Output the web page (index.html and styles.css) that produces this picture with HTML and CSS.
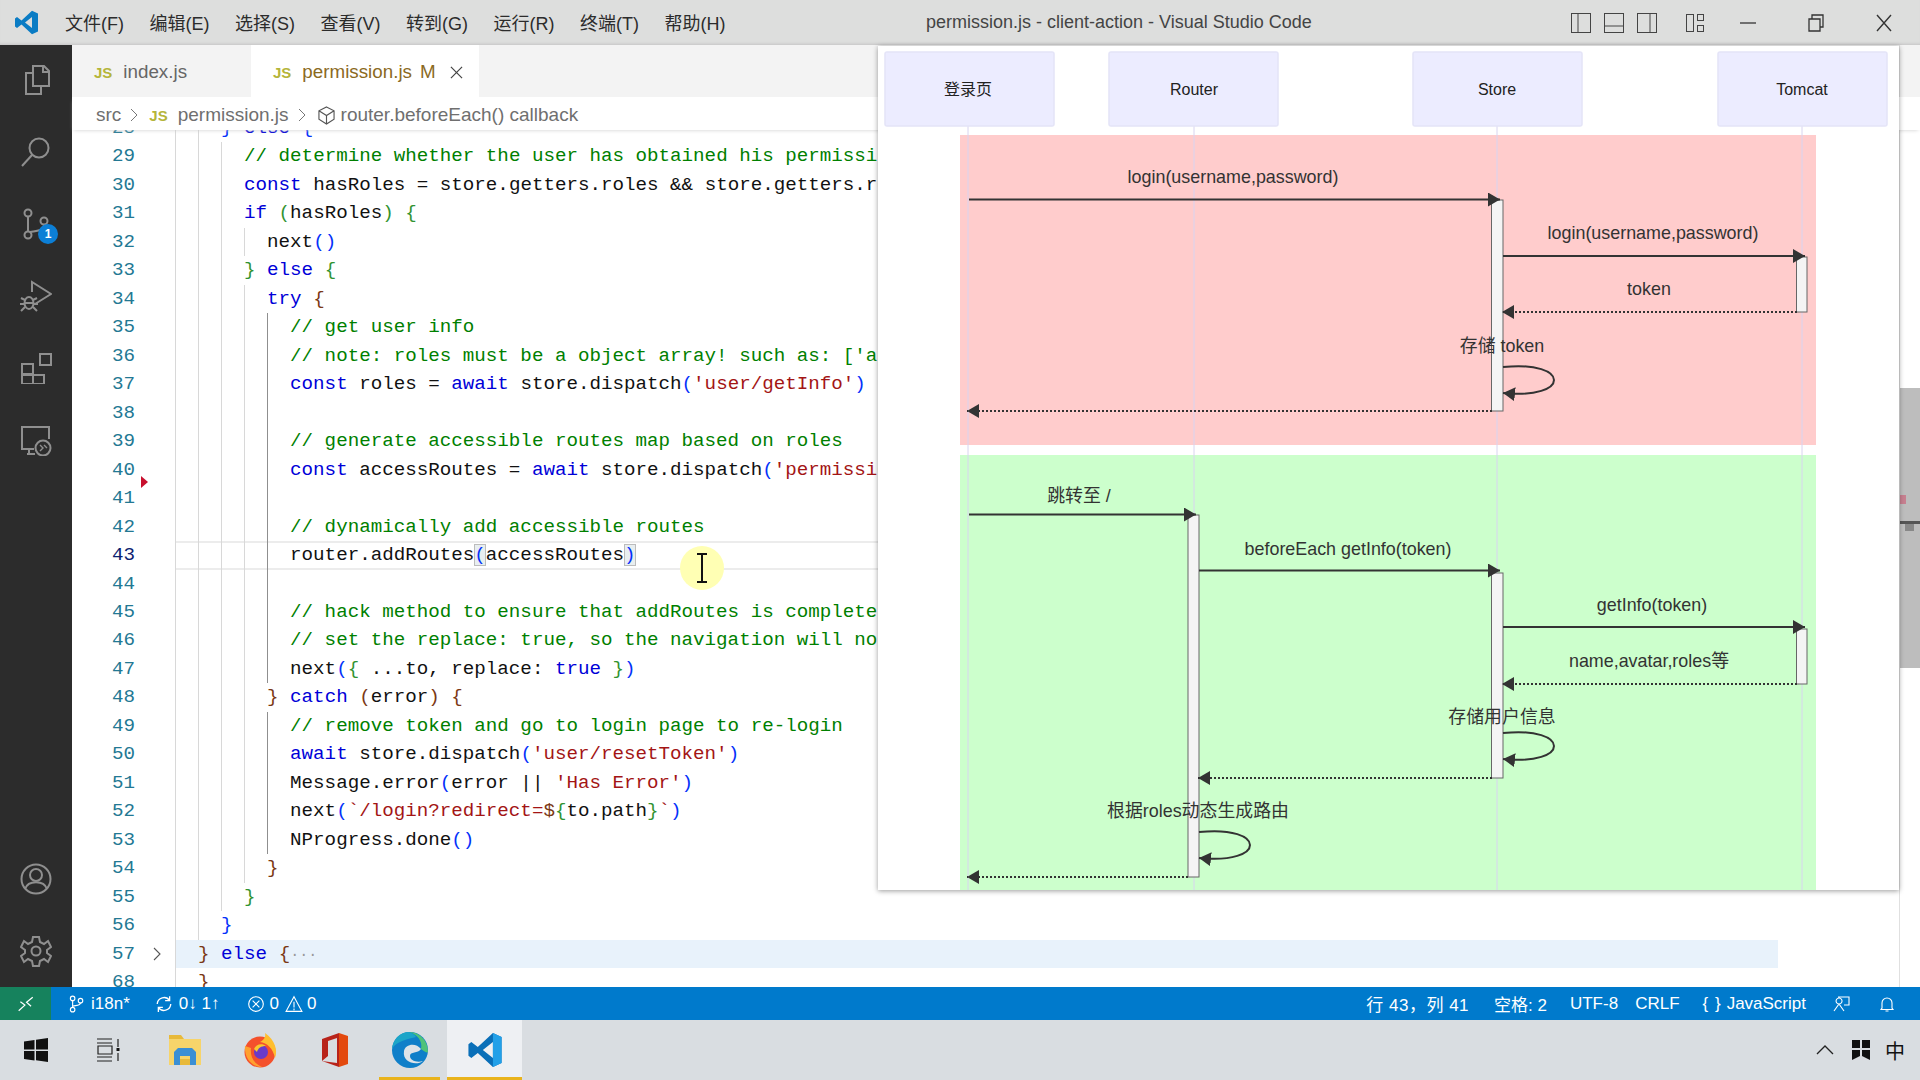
FILE: index.html
```html
<!DOCTYPE html>
<html lang="zh">
<head>
<meta charset="utf-8">
<title>permission.js - client-action - Visual Studio Code</title>
<link rel="stylesheet" href="styles.css">
</head>
<body>
<div class="app">
  <header class="titlebar">
    <svg class="logo" viewBox="0 0 100 100"><path fill="#0a7cc4" fill-rule="evenodd" d="M72 3 96 14V86L72 97 30 58 12 72 4 66V34L12 28 30 42ZM72 28 44 50 72 72Z"/></svg>
    <nav class="menu">
      <span>文件(F)</span><span>编辑(E)</span><span>选择(S)</span><span>查看(V)</span><span>转到(G)</span><span>运行(R)</span><span>终端(T)</span><span>帮助(H)</span>
    </nav>
    <div class="wintitle">permission.js - client-action - Visual Studio Code</div>
    <div class="layout-icons">
      <svg viewBox="0 0 22 22"><rect x="1.5" y="1.5" width="19" height="19" fill="none" stroke="#444"/><path d="M8 2V20" stroke="#444"/></svg>
      <svg viewBox="0 0 22 22"><rect x="1.5" y="1.5" width="19" height="19" fill="none" stroke="#444"/><path d="M2 14H20" stroke="#444"/></svg>
      <svg viewBox="0 0 22 22"><rect x="1.5" y="1.5" width="19" height="19" fill="none" stroke="#444"/><path d="M14 2V20" stroke="#444"/></svg>
      <svg class="split" viewBox="0 0 22 22"><rect x="2.5" y="2.5" width="7" height="17" fill="none" stroke="#444"/><rect x="13.5" y="2.5" width="6" height="6" fill="none" stroke="#444"/><rect x="13.5" y="13.5" width="6" height="6" fill="none" stroke="#444"/></svg>
    </div>
    <div class="win-controls">
      <svg viewBox="0 0 20 20"><path d="M2 10H18" stroke="#333" stroke-width="1.3"/></svg>
      <svg viewBox="0 0 20 20"><path d="M3 6H14V18H3ZM6 6V2H17V14H14" fill="none" stroke="#333" stroke-width="1.3"/></svg>
      <svg viewBox="0 0 20 20"><path d="M3 2 17 18M17 2 3 18" stroke="#333" stroke-width="1.4"/></svg>
    </div>
  </header>

  <div class="main">
    <aside class="activity">
      <svg class="act" viewBox="0 0 32 32"><path d="M13 2H24L29 7V22H13ZM23 2V8H29M13 9H6V30H21V22" fill="none" stroke="#8f8f8f" stroke-width="2"/></svg>
      <svg class="act" viewBox="0 0 32 32"><circle cx="19" cy="12" r="9.5" fill="none" stroke="#8f8f8f" stroke-width="2"/><path d="M12 19 2 30" stroke="#8f8f8f" stroke-width="2"/></svg>
      <div class="act-wrap">
        <svg class="act" viewBox="0 0 32 32"><circle cx="8" cy="5" r="3.5" fill="none" stroke="#8f8f8f" stroke-width="2"/><circle cx="8" cy="27" r="3.5" fill="none" stroke="#8f8f8f" stroke-width="2"/><circle cx="24" cy="13" r="3.5" fill="none" stroke="#8f8f8f" stroke-width="2"/><path d="M8 9V23M10 24C18 23 24 22 24 17" fill="none" stroke="#8f8f8f" stroke-width="2"/></svg>
        <span class="badge">1</span>
      </div>
      <svg class="act" viewBox="0 0 32 32"><path d="M12 12V2L31 14 15 24" fill="none" stroke="#8f8f8f" stroke-width="2"/><ellipse cx="9" cy="23" rx="4.5" ry="6" fill="none" stroke="#8f8f8f" stroke-width="2"/><path d="M1 18 5 20M17 18 13 20M0 24H4M14 24H18M1 31 5 27M17 31 13 27M4 23H14" stroke="#8f8f8f" stroke-width="2"/></svg>
      <svg class="act" viewBox="0 0 32 32"><path d="M2 12H13V23H24V32H2ZM2 22H13V32M13 12" fill="none" stroke="#8f8f8f" stroke-width="2"/><path d="M13 23H2M13 32V23" stroke="#8f8f8f" stroke-width="2"/><rect x="20" y="2" width="11" height="11" fill="none" stroke="#8f8f8f" stroke-width="2"/></svg>
      <svg class="act" viewBox="0 0 32 32"><path d="M14 25H2V3H29V15M7 30H15M9 25V30" fill="none" stroke="#8f8f8f" stroke-width="2"/><circle cx="23" cy="24" r="7.5" fill="#2c2c2c" stroke="#8f8f8f" stroke-width="2"/><path d="M20 21 23 24 20 27M24 21 27 24" fill="none" stroke="#8f8f8f" stroke-width="1.4"/></svg>
      <div class="act-bottom">
        <svg class="act" viewBox="0 0 32 32"><circle cx="16" cy="16" r="14.5" fill="none" stroke="#8f8f8f" stroke-width="2"/><circle cx="16" cy="12" r="6" fill="none" stroke="#8f8f8f" stroke-width="2"/><path d="M5 26C8 17 24 17 27 26" fill="none" stroke="#8f8f8f" stroke-width="2"/></svg>
        <svg class="act" viewBox="0 0 32 32"><circle cx="16" cy="16" r="4.5" fill="none" stroke="#8f8f8f" stroke-width="2"/><path d="M13 2H19L20 7 24 9 28 6 31 12 27 15V18L31 21 28 27 24 24 20 26 19 31H13L12 26 8 24 4 27 1 21 5 18V15L1 12 4 6 8 9 12 7Z" fill="none" stroke="#8f8f8f" stroke-width="2"/></svg>
      </div>
    </aside>

    <section class="editor">
      <div class="tabs">
        <div class="tab"><span class="js">JS</span><span class="tab-name">index.js</span></div>
        <div class="tab active"><span class="js">JS</span><span class="tab-name mod">permission.js</span><span class="tab-m">M</span><svg class="tab-x" viewBox="0 0 14 14"><path d="M1 1 13 13M13 1 1 13" stroke="#444" stroke-width="1.3"/></svg></div>
      </div>
      <div class="crumbs">
        <span>src</span>
        <svg class="chev" viewBox="0 0 8 16"><path d="M1 2 7 8 1 14" fill="none" stroke="#777"/></svg>
        <span class="js crumb-js">JS</span>
        <span>permission.js</span>
        <svg class="chev" viewBox="0 0 8 16"><path d="M1 2 7 8 1 14" fill="none" stroke="#777"/></svg>
        <svg class="cube" viewBox="0 0 18 20"><path d="M9 1 17 5V14L9 19 1 14V5ZM1 5 9 10 17 5M9 10V19" fill="none" stroke="#555" stroke-width="1.2"/></svg>
        <span>router.beforeEach() callback</span>
      </div>
      <div class="code-scroll">
        <div class="lines">
          <div class="line"><span class="num">28</span><span class="fold"></span><div class="code"><i class="g"></i><i class="g"></i><span class="t"><span class="b1">}</span> <span class="k">else</span> <span class="b1">{</span></span></div></div>
          <div class="line"><span class="num">29</span><span class="fold"></span><div class="code"><i class="g"></i><i class="g"></i><i class="g"></i><span class="t"><span class="c">// determine whether the user has obtained his permission roles through getInfo</span></span></div></div>
          <div class="line"><span class="num">30</span><span class="fold"></span><div class="code"><i class="g"></i><i class="g"></i><i class="g"></i><span class="t"><span class="k">const</span> hasRoles = store.getters.roles &amp;&amp; store.getters.roles.length &gt; 0</span></div></div>
          <div class="line"><span class="num">31</span><span class="fold"></span><div class="code"><i class="g"></i><i class="g"></i><i class="g"></i><span class="t"><span class="k">if</span> <span class="b2">(</span>hasRoles<span class="b2">)</span> <span class="b2">{</span></span></div></div>
          <div class="line"><span class="num">32</span><span class="fold"></span><div class="code"><i class="g"></i><i class="g"></i><i class="g"></i><i class="g"></i><span class="t">next<span class="b1">()</span></span></div></div>
          <div class="line"><span class="num">33</span><span class="fold"></span><div class="code"><i class="g"></i><i class="g"></i><i class="g"></i><span class="t"><span class="b2">}</span> <span class="k">else</span> <span class="b2">{</span></span></div></div>
          <div class="line"><span class="num">34</span><span class="fold"></span><div class="code"><i class="g"></i><i class="g"></i><i class="g"></i><i class="g"></i><span class="t"><span class="k">try</span> <span class="b3">{</span></span></div></div>
          <div class="line"><span class="num">35</span><span class="fold"></span><div class="code"><i class="g"></i><i class="g"></i><i class="g"></i><i class="g"></i><i class="g a"></i><span class="t"><span class="c">// get user info</span></span></div></div>
          <div class="line"><span class="num">36</span><span class="fold"></span><div class="code"><i class="g"></i><i class="g"></i><i class="g"></i><i class="g"></i><i class="g a"></i><span class="t"><span class="c">// note: roles must be a object array! such as: ['admin'] or ,['developer','editor']</span></span></div></div>
          <div class="line"><span class="num">37</span><span class="fold"></span><div class="code"><i class="g"></i><i class="g"></i><i class="g"></i><i class="g"></i><i class="g a"></i><span class="t"><span class="k">const</span> roles = <span class="k">await</span> store.dispatch<span class="b1">(</span><span class="s">'user/getInfo'</span><span class="b1">)</span></span></div></div>
          <div class="line"><span class="num">38</span><span class="fold"></span><div class="code"><i class="g"></i><i class="g"></i><i class="g"></i><i class="g"></i><i class="g a"></i></div></div>
          <div class="line"><span class="num">39</span><span class="fold"></span><div class="code"><i class="g"></i><i class="g"></i><i class="g"></i><i class="g"></i><i class="g a"></i><span class="t"><span class="c">// generate accessible routes map based on roles</span></span></div></div>
          <div class="line"><span class="num">40</span><span class="fold"><i class="err"></i></span><div class="code"><i class="g"></i><i class="g"></i><i class="g"></i><i class="g"></i><i class="g a"></i><span class="t"><span class="k">const</span> accessRoutes = <span class="k">await</span> store.dispatch<span class="b1">(</span><span class="s">'permission/generateRoutes'</span>, roles<span class="b1">)</span></span></div></div>
          <div class="line"><span class="num">41</span><span class="fold"></span><div class="code"><i class="g"></i><i class="g"></i><i class="g"></i><i class="g"></i><i class="g a"></i></div></div>
          <div class="line"><span class="num">42</span><span class="fold"></span><div class="code"><i class="g"></i><i class="g"></i><i class="g"></i><i class="g"></i><i class="g a"></i><span class="t"><span class="c">// dynamically add accessible routes</span></span></div></div>
          <div class="line cur"><span class="num">43</span><span class="fold"></span><div class="code"><i class="g"></i><i class="g"></i><i class="g"></i><i class="g"></i><i class="g a"></i><span class="t">router.addRoutes<span class="b1 box">(</span>accessRoutes<span class="b1 box">)</span></span></div></div>
          <div class="line"><span class="num">44</span><span class="fold"></span><div class="code"><i class="g"></i><i class="g"></i><i class="g"></i><i class="g"></i><i class="g a"></i></div></div>
          <div class="line"><span class="num">45</span><span class="fold"></span><div class="code"><i class="g"></i><i class="g"></i><i class="g"></i><i class="g"></i><i class="g a"></i><span class="t"><span class="c">// hack method to ensure that addRoutes is complete</span></span></div></div>
          <div class="line"><span class="num">46</span><span class="fold"></span><div class="code"><i class="g"></i><i class="g"></i><i class="g"></i><i class="g"></i><i class="g a"></i><span class="t"><span class="c">// set the replace: true, so the navigation will not leave a history record</span></span></div></div>
          <div class="line"><span class="num">47</span><span class="fold"></span><div class="code"><i class="g"></i><i class="g"></i><i class="g"></i><i class="g"></i><i class="g a"></i><span class="t">next<span class="b1">(</span><span class="b2">{</span> ...to, replace: <span class="k">true</span> <span class="b2">}</span><span class="b1">)</span></span></div></div>
          <div class="line"><span class="num">48</span><span class="fold"></span><div class="code"><i class="g"></i><i class="g"></i><i class="g"></i><i class="g"></i><span class="t"><span class="b3">}</span> <span class="k">catch</span> <span class="b3">(</span>error<span class="b3">)</span> <span class="b3">{</span></span></div></div>
          <div class="line"><span class="num">49</span><span class="fold"></span><div class="code"><i class="g"></i><i class="g"></i><i class="g"></i><i class="g"></i><i class="g a"></i><span class="t"><span class="c">// remove token and go to login page to re-login</span></span></div></div>
          <div class="line"><span class="num">50</span><span class="fold"></span><div class="code"><i class="g"></i><i class="g"></i><i class="g"></i><i class="g"></i><i class="g a"></i><span class="t"><span class="k">await</span> store.dispatch<span class="b1">(</span><span class="s">'user/resetToken'</span><span class="b1">)</span></span></div></div>
          <div class="line"><span class="num">51</span><span class="fold"></span><div class="code"><i class="g"></i><i class="g"></i><i class="g"></i><i class="g"></i><i class="g a"></i><span class="t">Message.error<span class="b1">(</span>error || <span class="s">'Has Error'</span><span class="b1">)</span></span></div></div>
          <div class="line"><span class="num">52</span><span class="fold"></span><div class="code"><i class="g"></i><i class="g"></i><i class="g"></i><i class="g"></i><i class="g a"></i><span class="t">next<span class="b1">(</span><span class="s">`/login?redirect=</span><span class="b3">$</span><span class="b2">{</span>to.path<span class="b2">}</span><span class="s">`</span><span class="b1">)</span></span></div></div>
          <div class="line"><span class="num">53</span><span class="fold"></span><div class="code"><i class="g"></i><i class="g"></i><i class="g"></i><i class="g"></i><i class="g a"></i><span class="t">NProgress.done<span class="b1">()</span></span></div></div>
          <div class="line"><span class="num">54</span><span class="fold"></span><div class="code"><i class="g"></i><i class="g"></i><i class="g"></i><i class="g"></i><span class="t"><span class="b3">}</span></span></div></div>
          <div class="line"><span class="num">55</span><span class="fold"></span><div class="code"><i class="g"></i><i class="g"></i><i class="g"></i><span class="t"><span class="b2">}</span></span></div></div>
          <div class="line"><span class="num">56</span><span class="fold"></span><div class="code"><i class="g"></i><i class="g"></i><span class="t"><span class="b1">}</span></span></div></div>
          <div class="line folded"><span class="num">57</span><span class="fold"><svg class="foldchev" viewBox="0 0 8 16"><path d="M1 2 7 8 1 14" fill="none" stroke="#555" stroke-width="1.1"/></svg></span><div class="code"><i class="g"></i><span class="t"><span class="b3">}</span> <span class="k">else</span> <span class="b3">{</span><span class="dots">···</span></span></div></div>
          <div class="line"><span class="num">68</span><span class="fold"></span><div class="code"><i class="g"></i><span class="t"><span class="b3">}</span></span></div></div>
        </div>
      </div>
      <div class="scrollbar"><i class="thumb"></i><i class="mark-red"></i><i class="mark-line"></i></div>
    </section>
  </div>

  <footer class="statusbar">
    <div class="remote"><svg viewBox="0 0 16 16"><path d="M1.5 14 7 9 3 6M14 2 8.500 6.500 12.500 10" fill="none" stroke="#fff" stroke-width="1.1"/></svg></div>
    <div class="st-left">
      <span class="st-item"><svg viewBox="0 0 16 16"><circle cx="5" cy="3" r="2" fill="none" stroke="#fff"/><circle cx="5" cy="13" r="2" fill="none" stroke="#fff"/><circle cx="12" cy="5" r="2" fill="none" stroke="#fff"/><path d="M5 5V11M5 10C9 9 12 9 12 7" fill="none" stroke="#fff"/></svg>i18n*</span>
      <span class="st-item"><svg viewBox="0 0 16 16"><path d="M2 8A6 6 0 0 1 13 5M14 8A6 6 0 0 1 3 11M13 1V5H9M3 15V11H7" fill="none" stroke="#fff" stroke-width="1.2"/></svg>0↓ 1↑</span>
      <span class="st-item errs"><svg viewBox="0 0 16 16"><circle cx="8" cy="8" r="6.5" fill="none" stroke="#fff"/><path d="M5 5 11 11M11 5 5 11" stroke="#fff"/></svg>0<svg class="warn" viewBox="0 0 16 16"><path d="M8 1.5 15 14.5H1ZM8 6V11M8 12V13.5" fill="none" stroke="#fff"/></svg>0</span>
    </div>
    <div class="st-right">
      <span class="pos">行 43，列 41</span>
      <span class="indent">空格: 2</span>
      <span>UTF-8</span>
      <span class="eol">CRLF</span>
      <span class="lang"><span class="brace">{ }</span>JavaScript</span>
      <svg class="feedback" viewBox="0 0 18 18"><path d="M5 2H16V10H11M1 16 6 9 11 16M6 9A3 3 0 1 1 6.100 9" fill="none" stroke="#fff" stroke-width="1.1"/></svg>
      <svg viewBox="0 0 18 18"><path d="M4 13V8A5 5 0 0 1 14 8V13L15 14.500H3ZM7.500 16H10.500" fill="none" stroke="#fff" stroke-width="1.1"/></svg>
    </div>
  </footer>

  <div class="taskbar">
    <div class="task t-win"><svg class="ti" viewBox="0 0 24 24"><path fill="#111" d="M0 3.500 10.500 2V11.500H0ZM12 1.800 24 0V11.500H12ZM0 13H10.500V22.500L0 21ZM12 13H24V24L12 22.200Z"/></svg></div>
    <div class="task t-view"><svg class="ti" viewBox="0 0 24 24"><path d="M1 1H16M1 5H16M2 8H16V16H2ZM1 19H16M1 23H16M22 1V9M22 15V23" fill="none" stroke="#222" stroke-width="1.2"/><rect x="20.500" y="10" width="3" height="3" fill="#111"/></svg></div>
    <div class="task"><svg class="ti big" viewBox="0 0 36 36"><path fill="#e8b93a" d="M2 3H14L17 7H2Z"/><path fill="#f7d46a" d="M2 7H34V33H2Z"/><path fill="#3b8fd4" d="M7 33V20L11 16H25L29 20V33H23V24H13V33Z"/><rect x="13" y="27" width="10" height="6" fill="#e8b93a"/></svg></div>
    <div class="task"><svg class="ti big" viewBox="0 0 36 36"><circle cx="18" cy="20" r="15.500" fill="#f4512c"/><path fill="#ffbe2e" d="M23 1C33 8 36 18 33 26 31 16 25 11 18 10 22 8 24 5 23 1Z"/><path fill="#ffa02e" d="M3 14C2 25 9 35 20 35 11 31 8 24 9 16Z"/><circle cx="19" cy="20" r="7" fill="#6a3bc8"/><path fill="#f8c82e" d="M12 17C14 12 20 11 24 14 19 14 16 16 15 20Z"/></svg></div>
    <div class="task"><svg class="ti big" viewBox="0 0 36 36"><path fill="#b8231a" d="M5 7 22 1V35L5 29 20 31V6L11 9V24L5 29Z"/><path fill="#e3490e" d="M22 1 31 4V32L22 35Z"/></svg></div>
    <div class="task on-edge"><svg class="ti big" viewBox="0 0 36 36"><circle cx="18" cy="18" r="18" fill="#0f7fc9"/><path fill="#4fc27a" d="M36 20C36 9 28 0 17 0 25 2 31 9 29 17 33 20 35 21 36 20Z"/><path fill="#dde3e8" d="M12 19C13 12 24 10 29 17 26 22 18 19 18 24 18 28 24 31 31 29 25 34 10 31 12 19Z"/><path fill="#1ca5c8" d="M17 0C8 0 1 7 0 17 4 9 17 7 24 5 22 2 20 1 17 0Z"/></svg></div>
    <div class="task on-code"><svg class="ti big" viewBox="0 0 100 100"><path fill="#0a6fb8" fill-rule="evenodd" d="M72 3 96 14V86L72 97 30 58 12 72 4 66V34L12 28 30 42ZM72 28 44 50 72 72Z"/><path fill="#22a0e8" d="M72 3 96 14V86L72 97Z"/></svg></div>
    <div class="tray">
      <svg class="caret" viewBox="0 0 20 12"><path d="M2 10 10 2 18 10" fill="none" stroke="#222" stroke-width="1.3"/></svg>
      <svg class="ime" viewBox="0 0 20 22"><path fill="#111" d="M1 1H9V9H1ZM11 1H19V9H11ZM1 11H9V17L1 21ZM11 11H19V21L11 17Z"/></svg>
      <span class="zh">中</span>
    </div>
  </div>

  <div class="floatwin">
    <svg class="diagram" viewBox="878 46 1021 844">
      <defs>
        <marker id="ah" markerUnits="userSpaceOnUse" markerWidth="13" markerHeight="14" refX="12" refY="7" orient="auto"><path d="M0 0 12 7 0 14Z" fill="#333"/></marker>
      </defs>
      <rect class="bg-red" x="960" y="135" width="856" height="310"/>
      <rect class="bg-green" x="960" y="455" width="856" height="435"/>
      <path class="life" d="M968 126V890M1194 126V890M1497 126V890M1802 126V890"/>

      <rect class="actor" x="885" y="52" width="169" height="74" rx="2"/>
      <rect class="actor" x="1109" y="52" width="169" height="74" rx="2"/>
      <rect class="actor" x="1413" y="52" width="169" height="74" rx="2"/>
      <rect class="actor" x="1718" y="52" width="169" height="74" rx="2"/>
      <text class="atext" x="968" y="89">登录页</text>
      <text class="atext" x="1194" y="89">Router</text>
      <text class="atext" x="1497" y="89">Store</text>
      <text class="atext" x="1802" y="89">Tomcat</text>

      <rect class="activ" x="1491.5" y="200" width="11.5" height="211"/>
      <rect class="activ" x="1796.5" y="257" width="10.5" height="55"/>
      <rect class="activ" x="1188" y="515" width="11" height="362"/>
      <rect class="activ" x="1491.5" y="573" width="11.5" height="205"/>
      <rect class="activ" x="1796.5" y="629" width="10.5" height="55"/>

      <text class="lbl" x="1233" y="177">login(username,password)</text>
      <path class="arrow" d="M969 199.5H1500"/>
      <text class="lbl" x="1653" y="233">login(username,password)</text>
      <path class="arrow" d="M1503 256H1805"/>
      <text class="lbl" x="1649" y="289">token</text>
      <path class="dash" d="M1797 312H1502"/>
      <text class="lbl" x="1502" y="346">存储 token</text>
      <path class="loop" d="M1503 367C1571 360 1571 400 1503 393"/>
      <path class="dash" d="M1492 411H967"/>

      <text class="lbl" x="1079" y="496">跳转至 /</text>
      <path class="arrow" d="M969 514.5H1196"/>
      <text class="lbl" x="1348" y="549">beforeEach getInfo(token)</text>
      <path class="arrow" d="M1199 570.5H1500"/>
      <text class="lbl" x="1652" y="605">getInfo(token)</text>
      <path class="arrow" d="M1503 627H1805"/>
      <text class="lbl" x="1649" y="661">name,avatar,roles等</text>
      <path class="dash" d="M1797 684H1502"/>
      <text class="lbl" x="1502" y="717">存储用户信息</text>
      <path class="loop" d="M1503 733C1571 726 1571 766 1503 759"/>
      <path class="dash" d="M1492 778H1198"/>
      <text class="lbl" x="1198" y="811">根据roles动态生成路由</text>
      <path class="loop" d="M1199 832C1267 825 1267 865 1199 858"/>
      <path class="dash" d="M1188 877H967"/>
    </svg>
  </div>

  <div class="cursor">
    <svg viewBox="0 0 16 30"><path d="M3 1H13M8 1V29M3 29H13" fill="none" stroke="#111" stroke-width="2"/></svg>
  </div>
</div>
</body>
</html>
```
FILE: styles.css
```css
* { box-sizing: border-box; }
html, body { margin: 0; height: 100%; overflow: hidden; background: #fff; }
body { font-family: "Liberation Sans", "Noto Sans CJK SC", sans-serif; }

.app { position: relative; width: 1920px; height: 1080px; display: flex; flex-direction: column; }

/* Title bar */
.titlebar { height: 45px; flex: none; display: flex; align-items: center; background: #dddedd; color: #333; font-size: 18px; box-shadow: inset 0 -3px 3px -2px #c4c4c4; padding-left: 14px; }
.logo { width: 25px; height: 25px; flex: none; }
.menu { display: flex; gap: 25.5px; margin-left: 26px; width: 825px; flex: none; color: #2c2c2c; padding-bottom: 2px; }
.menu span { white-space: nowrap; }
.wintitle { width: 400px; margin-left: 36px; flex: none; white-space: nowrap; color: #444; }
.layout-icons { display: flex; align-items: center; gap: 11px; margin-left: 244px; }
.layout-icons svg { width: 22px; height: 22px; }
.layout-icons .split { margin-left: 15px; }
.win-controls { display: flex; align-items: center; gap: 48px; margin-left: 32px; }
.win-controls svg { width: 20px; height: 20px; }

/* Body */
.main { flex: 1; min-height: 0; display: flex; }
.activity { width: 72px; flex: none; background: #2c2c2c; display: flex; flex-direction: column; align-items: center; gap: 40px; padding-top: 19px; padding-bottom: 20px; }
.act { width: 32px; height: 32px; display: block; flex: none; }
.act-wrap { position: relative; }
.badge { position: absolute; left: 18px; top: 16px; width: 20px; height: 20px; border-radius: 50%; background: #0c7fd6; color: #fff; font: bold 12px/20px "Liberation Sans", sans-serif; text-align: center; }
.act-bottom { margin-top: auto; display: flex; flex-direction: column; gap: 40px; }

.editor { flex: 1; min-width: 0; position: relative; display: flex; flex-direction: column; }
.tabs { height: 52px; flex: none; display: flex; background: #f3f3f3; }
.tab { width: 179px; display: flex; align-items: center; padding-left: 22px; padding-top: 2px; font-size: 18.8px; color: #666; }
.tab.active { width: 228px; background: #fff; }
.js { color: #b5b53a; font-weight: bold; font-size: 15px; font-family: "Liberation Sans", sans-serif; }
.crumb-js { margin-left: 2px; margin-right: 1px; }
.tab-name { margin-left: 11px; }
.tab-name.mod, .tab-m { color: #8b6a1e; }
.tab-m { margin-left: 8px; }
.tab-x { width: 13px; height: 13px; margin-left: 14px; }

.crumbs { height: 33px; flex: none; display: flex; align-items: center; gap: 9px; padding-left: 24px; padding-top: 3px; font-size: 19px; color: #6f6f6f; background: #fff; box-shadow: 0 2px 4px -2px #ccc; position: relative; z-index: 1; }
.chev { width: 8px; height: 16px; }
.cube { width: 17px; height: 19px; margin-left: 3px; margin-right: -3px; }

.code-scroll { flex: 1; min-height: 0; overflow: hidden; }
.lines { margin-top: -16px; font-family: "Liberation Mono", monospace; font-size: 19.2px; color: #111; }
.line { display: flex; height: 28.47px; line-height: 28.47px; padding-right: 142px; }
.num { width: 63px; flex: none; text-align: right; color: #237893; }
.fold { width: 40px; flex: none; position: relative; }
.foldchev { position: absolute; left: 18px; top: 6px; width: 8px; height: 16px; }
.err { position: absolute; left: 6px; top: 20px; width: 0; height: 0; border-left: 7px solid #c8102e; border-top: 6px solid transparent; border-bottom: 6px solid transparent; }
.code { flex: 1; min-width: 0; display: flex; white-space: pre; overflow: hidden; }
.g { width: 2ch; height: 100%; flex: none; border-left: 1px solid #d8d8d8; }
.g.a { border-left-color: #8f8f8f; }
.t { white-space: pre; }
.cur .num { color: #0b216f; }
.cur .code { box-shadow: inset 0 2px 0 #ececec, inset 0 -2px 0 #ececec; }
.folded .code { background: #e8f2fb; }
.dots { color: #999; font-size: 15px; }
.k { color: #0000d8; }
.c { color: #008000; }
.s { color: #a31515; }
.b1 { color: #0431fa; }
.b2 { color: #319331; }
.b3 { color: #7b3814; }
.box { background: #e8eef0; outline: 1px solid #bcbcbc; outline-offset: -1px; }

.scrollbar { position: absolute; left: 1827px; top: 0; bottom: 0; width: 21px; border-left: 1px solid #e0e0e0; }
.thumb { position: absolute; left: 0; right: 0; top: 343px; height: 280px; background: #bdbdbd; }
.mark-red { position: absolute; left: 0; top: 450px; width: 6px; height: 9px; background: #c78090; }
.mark-line { position: absolute; left: 0; right: 0; top: 476px; height: 3px; background: #555; }
.mark-line::after { content: ""; position: absolute; left: 5px; top: 3px; width: 9px; height: 7px; background: #888; }

/* Status bar */
.statusbar { height: 33px; flex: none; display: flex; align-items: center; background: #007acc; color: #fff; font-size: 17px; }
.statusbar svg { width: 18px; height: 18px; flex: none; }
.remote { width: 51px; height: 100%; background: #16825d; display: flex; align-items: center; justify-content: center; }
.st-left { display: flex; align-items: center; gap: 25px; margin-left: 16px; }
.st-item { display: flex; align-items: center; gap: 6px; white-space: nowrap; }
.st-item.errs { margin-left: 3px; gap: 4px; }
.statusbar .warn { margin-left: 2px; }
.st-right { margin-left: auto; display: flex; align-items: center; gap: 23px; padding-right: 24px; white-space: nowrap; }
.pos { letter-spacing: .5px; }
.indent { margin-left: 2px; }
.eol { margin-left: -6px; }
.lang { display: flex; gap: 5px; margin-right: 4px; }
.brace { letter-spacing: 1px; }
.statusbar .feedback { margin-right: 4px; }

/* Taskbar */
.taskbar { height: 60px; flex: none; display: flex; background: #d9dde1; }
.task { width: 75px; height: 100%; display: flex; align-items: center; justify-content: center; position: relative; flex: none; }
.task.t-win { width: 72px; }
.t-view .ti { margin-left: -4px; }
.ti { width: 24px; height: 24px; }
.ti.big { width: 36px; height: 36px; }
.on-edge::after, .on-code::after { content: ""; position: absolute; left: 7px; right: 7px; bottom: 0; height: 3px; background: #e9b31c; }
.on-code { background: #eef0f3; }
.on-code::after { left: 0; right: 0; }
.tray { margin-left: auto; display: flex; align-items: center; gap: 14px; padding-right: 15px; }
.caret { width: 20px; height: 12px; margin-right: 2px; }
.ime { width: 20px; height: 22px; }
.zh { font-size: 20px; color: #111; }

/* Floating diagram */
.floatwin { position: absolute; z-index: 2; left: 878px; top: 46px; width: 1021px; height: 844px; background: #fff; box-shadow: 0 1px 5px rgba(0,0,0,.4); }
.diagram { display: block; width: 100%; height: 100%; }
.bg-red { fill: #ffcccc; }
.bg-green { fill: #ccffcc; }
.life { stroke: #d8d4f0; stroke-width: 1; fill: none; }
.actor { fill: #ececff; stroke: #e4e4f8; stroke-width: 1.5; }
.atext { font: 16px "Liberation Sans", "Noto Sans CJK SC", sans-serif; fill: #222; text-anchor: middle; dominant-baseline: central; }
.lbl { font: 17.9px "Liberation Sans", "Noto Sans CJK SC", sans-serif; fill: #333; text-anchor: middle; dominant-baseline: central; }
.activ { fill: #f4f4f4; stroke: #666; stroke-width: 1; }
.arrow { stroke: #333; stroke-width: 2; fill: none; marker-end: url(#ah); }
.dash { stroke: #333; stroke-width: 2; stroke-dasharray: 2 2; fill: none; marker-end: url(#ah); }
.loop { stroke: #333; stroke-width: 2; fill: none; marker-end: url(#ah); }

/* Presentation cursor */
.cursor { position: absolute; left: 680px; top: 546px; width: 44px; height: 44px; border-radius: 50%; background: #ffffb4; display: flex; align-items: center; justify-content: center; z-index: 3; }
.cursor svg { width: 16px; height: 30px; }
```
